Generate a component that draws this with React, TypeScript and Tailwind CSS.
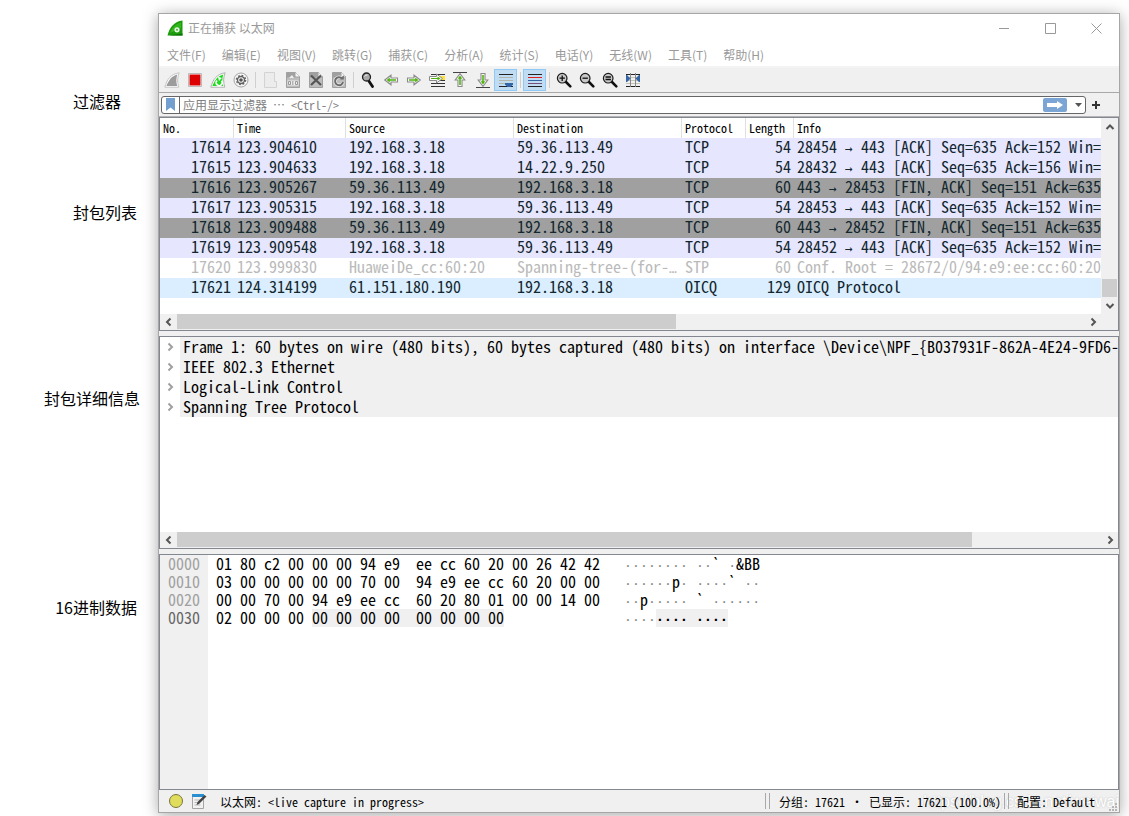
import React from "react";
import type { ReactNode } from "react";

const MONO = "font-['Noto_Sans_Mono_CJK_SC','Liberation_Mono','Noto_Sans_CJK_SC',monospace]";
const SANS = "font-['Noto_Sans_CJK_SC','Open_Sans',sans-serif]";

interface Packet {
  no: number;
  time: string;
  source: string;
  destination: string;
  protocol: string;
  length: number;
  info: string;
  tone: string;
}

const ACK = "bg-[#e7e6ff] text-[#12272e]";
const FIN = "bg-[#a0a0a0] text-[#12272e]";
const STP = "bg-white text-[#bababa]";
const OICQ = "bg-[#daeeff] text-[#12272e]";

const packets: Packet[] = [
  { no: 17614, time: "123.904610", source: "192.168.3.18", destination: "59.36.113.49", protocol: "TCP", length: 54, info: "28454 → 443 [ACK] Seq=635 Ack=152 Win=", tone: ACK },
  { no: 17615, time: "123.904633", source: "192.168.3.18", destination: "14.22.9.250", protocol: "TCP", length: 54, info: "28432 → 443 [ACK] Seq=635 Ack=156 Win=", tone: ACK },
  { no: 17616, time: "123.905267", source: "59.36.113.49", destination: "192.168.3.18", protocol: "TCP", length: 60, info: "443 → 28453 [FIN, ACK] Seq=151 Ack=635", tone: FIN },
  { no: 17617, time: "123.905315", source: "192.168.3.18", destination: "59.36.113.49", protocol: "TCP", length: 54, info: "28453 → 443 [ACK] Seq=635 Ack=152 Win=", tone: ACK },
  { no: 17618, time: "123.909488", source: "59.36.113.49", destination: "192.168.3.18", protocol: "TCP", length: 60, info: "443 → 28452 [FIN, ACK] Seq=151 Ack=635", tone: FIN },
  { no: 17619, time: "123.909548", source: "192.168.3.18", destination: "59.36.113.49", protocol: "TCP", length: 54, info: "28452 → 443 [ACK] Seq=635 Ack=152 Win=", tone: ACK },
  { no: 17620, time: "123.999830", source: "HuaweiDe_cc:60:20", destination: "Spanning-tree-(for-…", protocol: "STP", length: 60, info: "Conf. Root = 28672/0/94:e9:ee:cc:60:20", tone: STP },
  { no: 17621, time: "124.314199", source: "61.151.180.190", destination: "192.168.3.18", protocol: "OICQ", length: 129, info: "OICQ Protocol", tone: OICQ }
];

const columns = [
  { name: "No.", width: "w-[74px]" },
  { name: "Time", width: "w-28" },
  { name: "Source", width: "w-42" },
  { name: "Destination", width: "w-42" },
  { name: "Protocol", width: "w-16" },
  { name: "Length", width: "w-12" },
  { name: "Info", width: "w-auto" }
];

const details = [
  "Frame 1: 60 bytes on wire (480 bits), 60 bytes captured (480 bits) on interface \\Device\\NPF_{B037931F-862A-4E24-9FD6-",
  "IEEE 802.3 Ethernet",
  "Logical-Link Control",
  "Spanning Tree Protocol"
];

const hexRows = [
  { offset: "0000", hex: "01 80 c2 00 00 00 94 e9  ee cc 60 20 00 26 42 42", hexMark: "", ascii: "········ ··` ·&BB", asciiMark: "" },
  { offset: "0010", hex: "03 00 00 00 00 00 70 00  94 e9 ee cc 60 20 00 00", hexMark: "", ascii: "······p· ····` ··", asciiMark: "" },
  { offset: "0020", hex: "00 00 70 00 94 e9 ee cc  60 20 80 01 00 00 14 00", hexMark: "", ascii: "··p····· ` ······", asciiMark: "" },
  { offset: "0030", hex: "02 00 00 00 ", hexMark: "00 00 00 00  00 00 00 00", ascii: "····", asciiMark: "···· ····" }
];

const menus = ["文件(F)", "编辑(E)", "视图(V)", "跳转(G)", "捕获(C)", "分析(A)", "统计(S)", "电话(Y)", "无线(W)", "工具(T)", "帮助(H)"];

function Svg({ children, size = 16 }: { children: ReactNode; size?: number }) {
  return (
    <svg width={size} height={size} viewBox="0 0 16 16" fill="none" aria-hidden="true" className="shrink-0">
      {children}
    </svg>
  );
}

function Fin({ fill, edge, children }: { fill: string; edge: string; children?: ReactNode }) {
  return (
    <Svg>
      <path d="M.8 15.200C3 7.500 6.500 2 15.200.8c-2 4.500-2 9.500-.4 14.400z" fill="#fff" stroke={edge} />
      <path d="M2.400 14C4.500 8.500 7.500 3.800 13.300 2.400c-1.300 4-1.200 8-.1 11.600z" fill={fill} />
      {children}
    </Svg>
  );
}

function Doc({ pale, children }: { pale?: boolean; children?: ReactNode }) {
  return (
    <Svg>
      <path
        d={pale ? "M2.500.5h10v9h2v6h-12z" : "M1.500.5h9l4 4v11h-13z"}
        fill={pale ? "#ececec" : "#bdbdbd"}
        stroke={pale ? "#d3d3d3" : "#a0a0a0"}
      />
      {!pale && <path d="M1.500.5h9l4 4v1h-13z" fill="#a0a0a0" />}
      {!pale && <path d="M10.500.5v4h4z" fill="#f4f4f4" />}
      {children}
    </Svg>
  );
}

function Lens({ sign }: { sign: string }) {
  return (
    <Svg>
      <path d="M9.500 9.500l4.800 4.800" stroke="#111" strokeWidth="2.600" strokeLinecap="round" />
      <circle cx="6.200" cy="6.200" r="4.800" fill="#c9c9c9" stroke="#1a1a1a" strokeWidth="1.200" />
      <path d={sign} stroke="#111" strokeWidth="1.300" />
    </Svg>
  );
}

const arrowRight = "M1.500 6h6.500V3.200L14.300 8 8 12.800V10H1.500z";
const arrowRightCore = "M3 7.200h6.200V5.600L12.400 8l-3.200 2.400V8.800H3z";

function Arrow({ turn, line }: { turn: number; line?: string }) {
  return (
    <Svg>
      {line && <path d={line} stroke="#444" />}
      <g transform={`rotate(${turn} 8 8)`}>
        <path d={arrowRight} fill="#fff" stroke="#8a8a8a" strokeWidth="1.100" />
        <path d={arrowRightCore} fill="#4fb30d" />
      </g>
    </Svg>
  );
}

interface ToolItem {
  label: string;
  icon: ReactNode;
  active?: boolean;
}

const toolGroups: ToolItem[][] = [
  [
    { label: "开始捕获", icon: <Fin fill="#9c9c9c" edge="#c4c4c4" /> },
    {
      label: "停止捕获",
      icon: (
        <Svg>
          <path d="M1.500 1.500h13v13h-13z" fill="#fff" stroke="#bbb" />
          <path d="M2.500 2.500h11v11h-11z" fill="#dc0000" />
        </Svg>
      )
    },
    {
      label: "重新开始捕获",
      icon: (
        <Fin fill="#1fdc1f" edge="#b0b0b0">
          <path d="M7 8.500a3 3 0 1 0 4.500.2" stroke="#fff" strokeWidth="1.600" />
          <path d="M8 4.800l3.800 1.200-2.800 3z" fill="#fff" />
        </Fin>
      )
    },
    {
      label: "捕获选项",
      icon: (
        <Svg>
          <circle cx="8" cy="8" r="7" fill="#f8f8f8" stroke="#a4a4a4" />
          <circle cx="8" cy="8" r="4.600" stroke="#666" strokeWidth="1.400" strokeDasharray="1.800 1.813" />
          <circle cx="8" cy="8" r="3.500" stroke="#606060" strokeWidth="1.400" />
          <circle cx="8" cy="8" r="1.800" fill="#555" />
        </Svg>
      )
    }
  ],
  [
    { label: "打开", icon: <Doc pale /> },
    {
      label: "保存",
      icon: (
        <Doc>
          <path d="M2.500 8.500h11v5h-11z" fill="#ececec" />
          <path d="M3.500 9.500h2v3h-2zM7.800 9v4M10.500 9.500h2v3h-2z" stroke="#999" />
          <path d="M4 6l3-3 2 3z" fill="#eee" />
        </Doc>
      )
    },
    {
      label: "关闭",
      icon: (
        <Doc>
          <path d="M3 3.500l10 9.500M13 3.500L3 13" stroke="#555" strokeWidth="2.200" />
        </Doc>
      )
    },
    {
      label: "重新加载",
      icon: (
        <Doc>
          <path d="M11 6.500A4 4 0 1 0 12 10" stroke="#ededed" strokeWidth="3.400" />
          <path d="M11 6.500A4 4 0 1 0 12 10" stroke="#6c6c6c" strokeWidth="2" />
          <path d="M8.500 7.500h4.300V3.200z" fill="#6c6c6c" />
        </Doc>
      )
    }
  ],
  [
    {
      label: "查找",
      icon: (
        <Svg>
          <path d="M8.500 8.500l4 6" stroke="#111" strokeWidth="2.800" strokeLinecap="round" />
          <circle cx="6.500" cy="5" r="4" fill="#a8a8a8" stroke="#222" strokeWidth="1.300" />
          <path d="M4.500 4.500q1-2 3-1.500" stroke="#eee" />
        </Svg>
      )
    },
    { label: "后退", icon: <Arrow turn={180} /> },
    { label: "前进", icon: <Arrow turn={0} /> },
    {
      label: "转到分组",
      icon: (
        <Svg>
          <path d="M2 2.500h14M2 11.500h14M2 14.500h14M2 8.500h14" stroke="#333" />
          <path d="M10 4h6v4h-6z" fill="#ffe13a" />
          <path d="M.5 4.500h7V2L13.500 6.500 7.500 11V8.500h-7z" fill="#fff" stroke="#8a8a8a" />
          <path d="M2 5.900h6.500V4.500l3 2-3 2V7.100H2z" fill="#4fb30d" />
        </Svg>
      )
    },
    { label: "第一个分组", icon: <Arrow turn={-90} line="M1 .5h14" /> },
    { label: "最后分组", icon: <Arrow turn={90} line="M1 15.500h14" /> },
    {
      label: "自动滚动",
      active: true,
      icon: (
        <Svg>
          <path d="M1 2.500h14M1 14.500h14" stroke="#222" />
          <path d="M1 5.500h14M1 8.500h14M1 11.500h14" stroke="#b4b4a6" />
          <path d="M7 11h8v1.500L12.500 15h-3L7 12.500z" fill="#3465a4" />
        </Svg>
      )
    }
  ],
  [
    {
      label: "着色",
      active: true,
      icon: (
        <Svg>
          <path d="M1 2.500h14M1 14.500h14" stroke="#222" />
          <path d="M1 5.500h14" stroke="#e02020" />
          <path d="M1 8.500h14" stroke="#3465a4" />
          <path d="M1 11.500h14" stroke="#75507b" />
        </Svg>
      )
    }
  ],
  [
    { label: "放大", icon: <Lens sign="M3.500 6.200h5.400M6.200 3.500v5.400" /> },
    { label: "缩小", icon: <Lens sign="M3.500 6.200h5.400" /> },
    { label: "正常大小", icon: <Lens sign="M3.500 5h5.400M3.500 7.500h5.400" /> },
    {
      label: "调整列宽",
      icon: (
        <Svg>
          <path d="M1 2.500h14M1 14.500h14" stroke="#222" />
          <path d="M1 5.500h14M1 8.500h14M1 11.500h14" stroke="#c4c4b8" />
          <path d="M5.500 1v14M10.500 1v14" stroke="#888" />
          <path d="M1 3h1l3.500 3.500L2 10H1zM15 3h-1l-3.500 3.500L14 10h1z" fill="#3465a4" />
        </Svg>
      )
    }
  ]
];

const chevrons = {
  left: "M9.500 4.500L6 8l3.500 3.500",
  right: "M6.500 4.500L10 8l-3.500 3.500",
  up: "M4.500 10L8 6.500 11.500 10",
  down: "M4.500 6L8 9.500 11.500 6"
};

function Chevron({ dir, color = "#555" }: { dir: keyof typeof chevrons; color?: string }) {
  return (
    <Svg>
      <path d={chevrons[dir]} stroke={color} strokeWidth="2" />
    </Svg>
  );
}

function HorizontalScroll({ thumb }: { thumb: number }) {
  return (
    <div className="flex h-4 shrink-0 bg-[#f0f0f0]">
      <button aria-label="向左滚动" className="flex w-[17px] items-center justify-center">
        <Chevron dir="left" />
      </button>
      <div className="flex-1">
        <div className="h-[15px] bg-[#cdcdcd]" style={{ width: `${thumb}%` }} />
      </div>
      <button aria-label="向右滚动" className="flex w-[17px] items-center justify-center">
        <Chevron dir="right" />
      </button>
    </div>
  );
}

// The CJK mono font draws these marks two cells wide, so they get a one-cell box.
function Cells({ text, dotColor = "" }: { text: string; dotColor?: string }) {
  return text.split(/([→…·])/).map((part, i) =>
    /^[→…·]$/.test(part) ? (
      <span
        key={i}
        className={`inline-flex w-2 justify-center font-['DejaVu_Sans_Mono',monospace] text-[13px] leading-3 ${dotColor}`}
      >
        {part}
      </span>
    ) : (
      part
    )
  );
}

function TitleBar() {
  return (
    <header className="flex h-7 items-center pl-2">
      <Svg>
        <path d="M.5 15.500C2.500 7 7.500 1.500 15.500.5V15.500z" fill="#1b9a0c" />
        <path d="M3 13C5 7 9 3.500 14 2.500V8z" fill="#35b51c" />
        <circle cx="10" cy="9.800" r="2.600" fill="#e6f5e2" />
        <circle cx="10" cy="9.800" r="1" fill="#55a548" />
        <path d="M2 15.500h13.500v-2z" fill="#0e6f07" />
      </Svg>
      <h1 className="ml-[5px] flex-1 text-xs text-[#999]">正在捕获 以太网</h1>
      <button aria-label="最小化" className="flex h-7 w-[46px] items-center justify-center">
        <svg width="11" height="11" fill="none" stroke="#999"><path d="M0 5.500h10" /></svg>
      </button>
      <button aria-label="最大化" className="flex h-7 w-[46px] items-center justify-center">
        <svg width="11" height="11" fill="none" stroke="#999"><path d="M.5.500h10v10H.5z" /></svg>
      </button>
      <button aria-label="关闭窗口" className="flex h-7 w-[46px] items-center justify-center">
        <svg width="11" height="11" fill="none" stroke="#999"><path d="M.5.500l10 10M10.500.5l-10 10" /></svg>
      </button>
    </header>
  );
}

function Toolbar() {
  return (
    <div role="toolbar" className="flex h-[25px] items-center border-b border-[#a8a8a8] bg-[#f0f0f0] pl-px">
      {toolGroups.map((group, i) => (
        <div key={i} className="flex items-center">
          {i > 0 && <div className="mx-[2px] h-4 w-0.5 border-r border-[#cfcfcf]" />}
          {group.map((tool) => (
            <button
              key={tool.label}
              aria-label={tool.label}
              className={`flex h-[22px] w-[23px] items-center justify-center ${
                tool.active ? "border border-[#90c8f6] bg-[#c0dcf3]" : ""
              }`}
            >
              {tool.icon}
            </button>
          ))}
        </div>
      ))}
    </div>
  );
}

function FilterBar() {
  return (
    <div className="flex h-6 items-center border-b border-[#b4b4b4] bg-[#f0f0f0] pl-0.5">
      <div className="flex h-[18px] flex-1 items-center rounded-[3px] border border-[#666] bg-white">
        <button aria-label="书签" className="flex h-4 w-[18px] items-center justify-center border-r border-[#666]">
          <svg width="9" height="13"><path d="M0 0h9v13L4.500 9.500 0 13z" fill="#729fcf" /></svg>
        </button>
        <input
          aria-label="显示过滤器"
          placeholder="应用显示过滤器 … <Ctrl-/>"
          className={`${MONO} h-4 min-w-0 flex-1 pl-[3px] text-xs outline-none placeholder:text-[#808080]`}
        />
        <button aria-label="应用" className="flex h-[14px] w-6 items-center justify-center rounded-[2px] bg-[#7aa5d5]">
          <svg width="16" height="8"><path d="M0 2h10V0l6 4-6 4V6H0z" fill="#fff" /></svg>
        </button>
        <button aria-label="过滤器历史" className="flex h-4 w-[18px] items-center justify-center pl-1">
          <svg width="7" height="4"><path d="M0 0h7L3.500 4z" fill="#555" /></svg>
        </button>
      </div>
      <button aria-label="添加按钮" className="flex w-[33px] items-center pl-[6px]">
        <svg width="8" height="8"><path d="M4 0v8M0 4h8" stroke="#333" strokeWidth="2" /></svg>
      </button>
    </div>
  );
}

function PacketList() {
  return (
    <section className="flex h-[214px] shrink-0 border border-[#828790] bg-white">
      <div className="flex min-w-0 flex-1 flex-col">
        <div className="flex-1 overflow-hidden">
          <table className={`${MONO} w-full table-fixed border-separate border-spacing-0 whitespace-nowrap`}>
            <thead>
              <tr className="h-5 text-left text-xs leading-4">
                {columns.map((col) => (
                  <th
                    key={col.name}
                    className={`${col.width} border-r border-[#e0e0e0] p-0 pl-[3px] font-normal last:border-r-0`}
                  >
                    {col.name}
                  </th>
                ))}
              </tr>
            </thead>
            <tbody className="align-top text-base leading-4">
              {packets.map((p) => (
                <tr key={p.no} className={`h-5 ${p.tone}`}>
                  <td className="p-0 pr-[3px] text-right">{p.no}</td>
                  <td className="p-0 pl-[3px]">{p.time}</td>
                  <td className="p-0 pl-[3px]">{p.source}</td>
                  <td className="p-0 pl-[3px]"><Cells text={p.destination} /></td>
                  <td className="p-0 pl-[3px]">{p.protocol}</td>
                  <td className="p-0 pr-[3px] text-right">{p.length}</td>
                  <td className="p-0 pl-[3px]"><Cells text={p.info} /></td>
                </tr>
              ))}
            </tbody>
          </table>
        </div>
        <HorizontalScroll thumb={55} />
      </div>
      <div className="flex w-[17px] flex-col items-center bg-[#f0f0f0] pb-4">
        <button aria-label="向上滚动" className="flex h-[17px] items-center">
          <Chevron dir="up" />
        </button>
        <div className="flex w-full flex-1 flex-col justify-end pl-px">
          <div className="h-[18px] w-[15px] bg-[#cdcdcd]" />
        </div>
        <button aria-label="向下滚动" className="flex h-[17px] items-center">
          <Chevron dir="down" />
        </button>
      </div>
    </section>
  );
}

function PacketDetails() {
  return (
    <section className="flex h-[213px] shrink-0 flex-col border border-[#828790] bg-white">
      <ul className={`${MONO} flex-1 overflow-hidden text-base leading-[18px] whitespace-nowrap`}>
        {details.map((line) => (
          <li key={line} className="flex h-5">
            <button aria-label="展开" className="flex w-5 shrink-0 items-center justify-center">
              <Chevron dir="right" color="#a0a0a0" />
            </button>
            <span className="min-w-0 flex-1 bg-[#f0f0f0] pl-[3px]">{line}</span>
          </li>
        ))}
      </ul>
      <HorizontalScroll thumb={86} />
    </section>
  );
}

function HexDump() {
  return (
    <section className="flex flex-1 border border-[#828790] bg-linear-to-r from-[#f0f0f0] from-[48px] to-white to-[48px]">
      <table className={`${MONO} self-start text-base leading-4 whitespace-pre`}>
        <tbody className="align-top">
          {hexRows.map((row, i) => (
            <tr key={row.offset} className="h-[18px]">
              <th className={`w-12 p-0 font-normal ${i === 3 ? "text-[#666]" : "text-[#a0a0a0]"}`}>{row.offset}</th>
              <td className="p-0 pl-2">
                {row.hex}
                {row.hexMark && <span className="inline-block h-[18px] bg-[#f0f0f0] align-top">{row.hexMark}</span>}
              </td>
              <td className="p-0 pl-6">
                <Cells text={row.ascii} dotColor="text-[#888]" />
                {row.asciiMark && (
                  <span className="inline-block h-[18px] bg-[#f0f0f0] align-top">
                    <Cells text={row.asciiMark} dotColor="font-bold" />
                  </span>
                )}
              </td>
            </tr>
          ))}
        </tbody>
      </table>
    </section>
  );
}

function Grip() {
  return <div className="h-4 w-[5px] shrink-0 border-x border-[#a8a8a8]" />;
}

function StatusBar() {
  return (
    <footer className={`${MONO} relative isolate flex h-[22px] items-center overflow-hidden bg-[#f0f0f0] pl-[10px] text-xs leading-4 whitespace-pre`}>
      <Svg>
        <circle cx="7" cy="8" r="6.500" fill="#e0dc5c" stroke="#77773a" />
      </Svg>
      <span className="ml-[6px]">
        <Svg>
          <path d="M1.500 2.500h11v13h-11z" fill="#f2f2f2" stroke="#a5a5a5" />
          <path d="M1 1h12v3H1z" fill="#2a8fd0" />
          <path d="M3.500 7h6M3.500 9.500h4M3.500 12h6" stroke="#b8b8b8" />
          <path d="M5.500 12l1-3L13.500 2l2 1.500-7.500 7.500z" fill="#444" />
        </Svg>
      </span>
      <span className="ml-[13px] flex-1 pt-0.5">{"以太网: <live capture in progress>"}</span>
      <Grip />
      <span className="ml-[9px] w-[225px] pt-0.5">分组: 17621 · 已显示: 17621 (100.0%)</span>
      <Grip />
      <span className="ml-2 w-[92px] pt-0.5">配置: Default</span>
      <svg width="9" height="9" className="mr-px self-end" fill="#b5b5b5">
        <path d="M6 0h2v2H6zM3 3h2v2H3zM6 3h2v2H6zM0 6h2v2H0zM3 6h2v2H3zM6 6h2v2H6z" />
      </svg>
      <span className="absolute top-0 right-0 -z-10 font-['Liberation_Sans',sans-serif] text-base text-white [text-shadow:0_0_2px_#bbb]">
        https://blog.csdn.net/weiwai
      </span>
    </footer>
  );
}

export default function App() {
  return (
    <div className={`${SANS} flex min-h-screen overflow-hidden bg-white pt-[13px] pr-[9px] pb-[3px] text-black`}>
      <aside className="flex w-[158px] shrink-0 flex-col pr-[18px] text-right text-base leading-6">
        <p className="mt-[76px] pr-[19px]">过滤器</p>
        <p className="mt-[87px] pr-[3px]">封包列表</p>
        <p className="mt-[162px]">封包详细信息</p>
        <p className="mt-[185px] pr-[3px]">16进制数据</p>
      </aside>
      <main className="flex min-w-0 flex-1 flex-col border border-[#a6a6a6] bg-white shadow-[0_2px_14px_rgba(0,0,0,0.35)]">
        <TitleBar />
        <nav className="flex h-[26px] items-center gap-4 border-b-2 border-[#f3f3f3] pt-0.5 pl-2 text-xs text-[#999]">
          {menus.map((menu) => (
            <button key={menu}>{menu}</button>
          ))}
        </nav>
        <Toolbar />
        <FilterBar />
        <div className="flex flex-1 flex-col gap-[5px] bg-[#f0f0f0]">
          <PacketList />
          <PacketDetails />
          <HexDump />
        </div>
        <StatusBar />
      </main>
    </div>
  );
}
